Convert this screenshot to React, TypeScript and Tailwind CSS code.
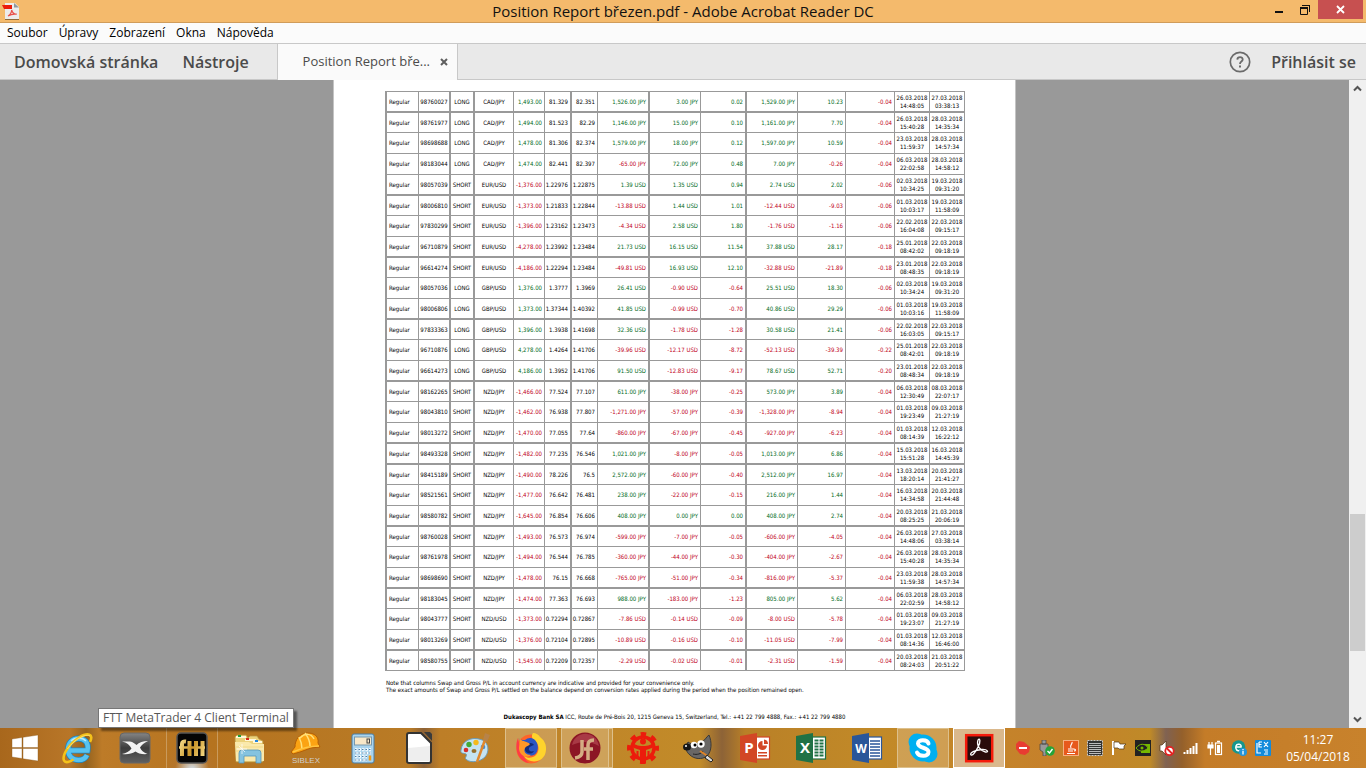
import React from 'react';
import clsx from 'clsx';

const UI_FONT = "font-['Open_Sans','Noto_Sans',sans-serif]";

// type, id, side, pair, amount, open, close, gross, swap, swap acc, net, net acc, fee, opened, closed
const ROWS = `Regular|98760027|LONG|CAD/JPY|1,493.00|81.329|82.351|1,526.00 JPY|3.00 JPY|0.02|1,529.00 JPY|10.23|-0.04|26.03.2018 14:48:05|27.03.2018 03:38:13
Regular|98761977|LONG|CAD/JPY|1,494.00|81.523|82.29|1,146.00 JPY|15.00 JPY|0.10|1,161.00 JPY|7.70|-0.04|26.03.2018 15:40:28|28.03.2018 14:35:34
Regular|98698688|LONG|CAD/JPY|1,478.00|81.306|82.374|1,579.00 JPY|18.00 JPY|0.12|1,597.00 JPY|10.59|-0.04|23.03.2018 11:59:37|28.03.2018 14:57:34
Regular|98183044|LONG|CAD/JPY|1,474.00|82.441|82.397|-65.00 JPY|72.00 JPY|0.48|7.00 JPY|-0.26|-0.04|06.03.2018 22:02:58|28.03.2018 14:58:12
Regular|98057039|SHORT|EUR/USD|-1,376.00|1.22976|1.22875|1.39 USD|1.35 USD|0.94|2.74 USD|2.02|-0.06|02.03.2018 10:34:25|19.03.2018 09:31:20
Regular|98006810|SHORT|EUR/USD|-1,373.00|1.21833|1.22844|-13.88 USD|1.44 USD|1.01|-12.44 USD|-9.03|-0.06|01.03.2018 10:03:17|19.03.2018 11:58:09
Regular|97830299|SHORT|EUR/USD|-1,396.00|1.23162|1.23473|-4.34 USD|2.58 USD|1.80|-1.76 USD|-1.16|-0.06|22.02.2018 16:04:08|22.03.2018 09:15:17
Regular|96710879|SHORT|EUR/USD|-4,278.00|1.23992|1.23484|21.73 USD|16.15 USD|11.54|37.88 USD|28.17|-0.18|25.01.2018 08:42:02|22.03.2018 09:18:19
Regular|96614274|SHORT|EUR/USD|-4,186.00|1.22294|1.23484|-49.81 USD|16.93 USD|12.10|-32.88 USD|-21.89|-0.18|23.01.2018 08:48:35|22.03.2018 09:18:19
Regular|98057036|LONG|GBP/USD|1,376.00|1.3777|1.3969|26.41 USD|-0.90 USD|-0.64|25.51 USD|18.30|-0.06|02.03.2018 10:34:24|19.03.2018 09:31:20
Regular|98006806|LONG|GBP/USD|1,373.00|1.37344|1.40392|41.85 USD|-0.99 USD|-0.70|40.86 USD|29.29|-0.06|01.03.2018 10:03:16|19.03.2018 11:58:09
Regular|97833363|LONG|GBP/USD|1,396.00|1.3938|1.41698|32.36 USD|-1.78 USD|-1.28|30.58 USD|21.41|-0.06|22.02.2018 16:03:05|22.03.2018 09:15:17
Regular|96710876|LONG|GBP/USD|4,278.00|1.4264|1.41706|-39.96 USD|-12.17 USD|-8.72|-52.13 USD|-39.39|-0.22|25.01.2018 08:42:01|22.03.2018 09:18:19
Regular|96614273|LONG|GBP/USD|4,186.00|1.3952|1.41706|91.50 USD|-12.83 USD|-9.17|78.67 USD|52.71|-0.20|23.01.2018 08:48:34|22.03.2018 09:18:19
Regular|98162265|SHORT|NZD/JPY|-1,466.00|77.524|77.107|611.00 JPY|-38.00 JPY|-0.25|573.00 JPY|3.89|-0.04|06.03.2018 12:30:49|08.03.2018 22:07:17
Regular|98043810|SHORT|NZD/JPY|-1,462.00|76.938|77.807|-1,271.00 JPY|-57.00 JPY|-0.39|-1,328.00 JPY|-8.94|-0.04|01.03.2018 19:23:49|09.03.2018 21:27:19
Regular|98013272|SHORT|NZD/JPY|-1,470.00|77.055|77.64|-860.00 JPY|-67.00 JPY|-0.45|-927.00 JPY|-6.23|-0.04|01.03.2018 08:14:39|12.03.2018 16:22:12
Regular|98493328|SHORT|NZD/JPY|-1,482.00|77.235|76.546|1,021.00 JPY|-8.00 JPY|-0.05|1,013.00 JPY|6.86|-0.04|15.03.2018 15:51:28|16.03.2018 14:45:39
Regular|98415189|SHORT|NZD/JPY|-1,490.00|78.226|76.5|2,572.00 JPY|-60.00 JPY|-0.40|2,512.00 JPY|16.97|-0.04|13.03.2018 18:20:14|20.03.2018 21:41:27
Regular|98521561|SHORT|NZD/JPY|-1,477.00|76.642|76.481|238.00 JPY|-22.00 JPY|-0.15|216.00 JPY|1.44|-0.04|16.03.2018 14:34:58|20.03.2018 21:44:48
Regular|98580782|SHORT|NZD/JPY|-1,645.00|76.854|76.606|408.00 JPY|0.00 JPY|0.00|408.00 JPY|2.74|-0.04|20.03.2018 08:25:25|21.03.2018 20:06:19
Regular|98760028|SHORT|NZD/JPY|-1,493.00|76.573|76.974|-599.00 JPY|-7.00 JPY|-0.05|-606.00 JPY|-4.05|-0.04|26.03.2018 14:48:06|27.03.2018 03:38:14
Regular|98761978|SHORT|NZD/JPY|-1,494.00|76.544|76.785|-360.00 JPY|-44.00 JPY|-0.30|-404.00 JPY|-2.67|-0.04|26.03.2018 15:40:28|28.03.2018 14:35:34
Regular|98698690|SHORT|NZD/JPY|-1,478.00|76.15|76.668|-765.00 JPY|-51.00 JPY|-0.34|-816.00 JPY|-5.37|-0.04|23.03.2018 11:59:38|28.03.2018 14:57:34
Regular|98183045|SHORT|NZD/JPY|-1,474.00|77.363|76.693|988.00 JPY|-183.00 JPY|-1.23|805.00 JPY|5.62|-0.04|06.03.2018 22:02:59|28.03.2018 14:58:12
Regular|98043777|SHORT|NZD/USD|-1,373.00|0.72294|0.72867|-7.86 USD|-0.14 USD|-0.09|-8.00 USD|-5.78|-0.04|01.03.2018 19:23:07|09.03.2018 21:27:19
Regular|98013269|SHORT|NZD/USD|-1,376.00|0.72104|0.72895|-10.89 USD|-0.16 USD|-0.10|-11.05 USD|-7.99|-0.04|01.03.2018 08:14:36|12.03.2018 16:46:00
Regular|98580755|SHORT|NZD/USD|-1,545.00|0.72209|0.72357|-2.29 USD|-0.02 USD|-0.01|-2.31 USD|-1.59|-0.04|20.03.2018 08:24:03|21.03.2018 20:51:22`
  .split('\n')
  .map((line) => line.split('|'));

const COLS = [
  { width: 'w-[34px]', cell: 'border-l-2 border-r pl-[2px] text-left' },
  { width: 'w-[32px]', cell: 'border-r-2 text-center' },
  { width: 'w-[24px]', cell: 'border-r-2 text-center' },
  { width: 'w-[39px]', cell: 'border-r text-center' },
  { width: 'w-[31px]', cell: 'border-r pr-[2px] text-right', signed: true },
  { width: 'w-[27px]', cell: 'border-r-2 pr-[2px] text-right' },
  { width: 'w-[26px]', cell: 'border-r pr-[2px] text-right' },
  { width: 'w-[52px]', cell: 'border-r-2 pr-[2px] text-right', signed: true },
  { width: 'w-[51px]', cell: 'border-r pr-[2px] text-right', signed: true },
  { width: 'w-[46px]', cell: 'border-r-2 pr-[2px] text-right', signed: true },
  { width: 'w-[51px]', cell: 'border-r pr-[2px] text-right', signed: true },
  { width: 'w-[48px]', cell: 'border-r pr-[2px] text-right', signed: true },
  { width: 'w-[49px]', cell: 'border-r pr-[2px] text-right', signed: true },
  { width: 'w-[35px]', cell: 'border-r text-center', date: true },
  { width: 'w-[35px]', cell: 'border-r text-center', date: true },
];

// rows that close with a double rule
const THICK = [0, 4, 7, 10, 13, 16, 17, 20, 23, 26];

function PositionTable() {
  return (
    <table aria-label="Positions" className="w-[580px] table-fixed border-separate border-spacing-0 border-t border-[#999] text-[6px] leading-[8px]">
      <colgroup>
        {COLS.map((c, i) => <col key={i} className={c.width} />)}
      </colgroup>
      <tbody>
        {ROWS.map((row, r) => {
          const afterThick = THICK.includes(r - 1) && !THICK.includes(r);
          return (
            <tr key={row[1]} className={afterThick ? 'h-[20px]' : 'h-[21px]'}>
              {row.map((value, i) => {
                const col = COLS[i];
                return (
                  <td
                    key={i}
                    className={clsx(
                      'border-[#999] p-0 align-middle',
                      !col.date && 'whitespace-nowrap',
                      THICK.includes(r) ? 'border-b-2' : 'border-b',
                      col.cell,
                      col.signed ? (value.startsWith('-') ? 'text-[#c00020]' : 'text-[#006a1a]') : 'text-black',
                    )}
                  >
                    {value}
                  </td>
                );
              })}
            </tr>
          );
        })}
      </tbody>
    </table>
  );
}

function PdfIcon() {
  return (
    <svg width="18" height="18" viewBox="0 0 18 18" aria-hidden="true">
      <path d="M3 1h10l4 4v12H3z" fill="#ececec" />
      <path d="M12 1l5 4.500h-5z" fill="#8f979c" />
      <path d="M3 17.500h14" stroke="#8d6a3a" />
      <path d="M0 3h10v4H2z" fill="#ea1c0a" />
      <path d="M6 14c2-1 3.500-3.500 3.700-6 .8 3 2.300 4.500 5 4.200-3-.5-6 .2-8.700 1.800z" fill="none" stroke="#e8524c" strokeWidth="1.200" />
    </svg>
  );
}

function TitleBar() {
  return (
    <header className="relative flex h-[23px] shrink-0 items-center justify-center border-b border-[#d09c5a] bg-[#f4ba6c]">
      <span className="absolute left-[2px] top-[2px]"><PdfIcon /></span>
      <h1 className="text-[15px] leading-[20px] text-[#111]">Position Report březen.pdf - Adobe Acrobat Reader DC</h1>
      <div className="absolute right-[3px] top-0 flex h-[19px]">
        <button aria-label="Minimize" className="flex w-[27px] items-center justify-center">
          <svg width="10" height="10" viewBox="0 0 10 10"><path d="M1 7h8" stroke="#111" strokeWidth="2" /></svg>
        </button>
        <button aria-label="Restore" className="flex w-[26px] items-center justify-center">
          <svg width="12" height="12" viewBox="0 0 12 12" fill="none" stroke="#111"><path d="M1.500 4v6.500h7V4M3.500 1.500h7V8" /><path d="M1 4h8" strokeWidth="2" /><path d="M3 1.500h8" /></svg>
        </button>
        <button aria-label="Close" className="flex w-[45px] items-center justify-center bg-[#c75050]">
          <svg width="9" height="9" viewBox="0 0 9 9"><path d="M1 1l7 7M8 1L1 8" stroke="#fff" strokeWidth="1.800" /></svg>
        </button>
      </div>
    </header>
  );
}

function MenuBar() {
  return (
    <nav className="flex h-[20px] shrink-0 items-center gap-[11px] bg-[#fbfbfb] px-[7px] text-xs text-black">
      {['Soubor', 'Úpravy', 'Zobrazení', 'Okna', 'Nápověda'].map((m) => <button key={m}>{m}</button>)}
    </nav>
  );
}

function ToolBar() {
  return (
    <div className="flex h-[37px] shrink-0 items-stretch border-y border-[#c8c8c8] bg-[#e9e9e9] text-[#4b4b4b]">
      <div className="flex w-[277px] items-center gap-[24px] whitespace-nowrap pl-[14px] text-base font-semibold">
        <button>Domovská stránka</button>
        <button>Nástroje</button>
      </div>
      <div className="-mb-px flex w-[181px] items-center justify-end gap-[10px] border-x border-[#c8c8c8] bg-[#fafafa] pr-[9px]">
        <span className="text-[13px]">Position Report bře...</span>
        <button aria-label="Close tab">
          <svg width="8" height="8" viewBox="0 0 8 8"><path d="M1 1l6 6M7 1L1 7" stroke="#5e5e5e" strokeWidth="2" /></svg>
        </button>
      </div>
      <div className="ml-auto flex items-center gap-[20px] pr-[10px]">
        <button aria-label="Help">
          <svg width="22" height="22" viewBox="0 0 22 22" fill="none" stroke="#6b6b6b">
            <circle cx="11" cy="11" r="9.700" strokeWidth="1.700" />
            <path d="M8.300 8.600c.2-3.300 5.600-3.200 5.400 0-.1 2-2.700 2-2.700 4.300" strokeWidth="1.800" />
            <path d="M11 14.500v2" strokeWidth="2" />
          </svg>
        </button>
        <button className="text-base font-semibold">Přihlásit se</button>
      </div>
    </div>
  );
}

function ScrollBar() {
  return (
    <div className="flex w-[17px] shrink-0 flex-col bg-[#f0f0f0] px-px">
      <button aria-label="Scroll up" className="flex h-[17px] items-center justify-center">
        <svg width="9" height="7" viewBox="0 0 9 7"><path d="M1 5.500l3.500-3.500L8 5.500" fill="none" stroke="#555" strokeWidth="2" /></svg>
      </button>
      <div className="flex-[417]" />
      <div className="flex-[137] bg-[#cdcdcd]" />
      <div className="flex-[60]" />
      <button aria-label="Scroll down" className="flex h-[17px] items-center justify-center">
        <svg width="9" height="7" viewBox="0 0 9 7"><path d="M1 1.500L4.500 5 8 1.500" fill="none" stroke="#555" strokeWidth="2" /></svg>
      </button>
    </div>
  );
}

function Document() {
  return (
    <main className="flex min-h-0 flex-1 bg-[#999]">
      <div className="flex flex-1 justify-center overflow-hidden">
        <article className="w-full max-w-[683px] border-x border-[#c4c4c4] bg-white px-[51px] pt-[11px] font-['DejaVu_Sans_Condensed','DejaVu_Sans',sans-serif] text-[6px] leading-[7px] text-black">
          <PositionTable />
          <p className="mt-[8px] pl-px">Note that columns Swap and Gross P/L in account currency are indicative and provided for your convenience only.</p>
          <p className="pl-px">The exact amounts of Swap and Gross P/L settled on the balance depend on conversion rates applied during the period when the position remained open.</p>
          <p className="mt-[20px] text-center">
            <b>Dukascopy Bank SA</b> ICC, Route de Pré-Bois 20, 1215 Geneva 15, Switzerland, Tel.: +41 22 799 4888, Fax.: +41 22 799 4880
          </p>
        </article>
      </div>
      <ScrollBar />
    </main>
  );
}

function Icon({ children }: { children: React.ReactNode }) {
  return <svg width="32" height="32" viewBox="0 0 32 32" aria-hidden="true">{children}</svg>;
}

function StartIcon() {
  return (
    <svg width="28" height="28" viewBox="0 0 28 28" aria-hidden="true" fill="#fff" stroke="#8a5a20" strokeWidth=".4">
      <path d="M1 5l10-1.500v10H1zM12 3.300L27 1v12.500H12zM1 14.500h10v10L1 23zM12 14.500h15V27l-15-2.200z" />
    </svg>
  );
}

function ExplorerIcon() {
  return (
    <Icon>
      <path d="M6 18.500h19.500C27 10 22 6.500 16.500 6.500 10 6.500 6 11.500 6 17.500c0 7 5 10.500 10.500 10.500 4 0 7-1.500 8.500-5" fill="none" stroke="#1b84c4" strokeWidth="6" />
      <path d="M6 18.500h19.500C27 10 22 6.500 16.500 6.500 10 6.500 6 11.500 6 17.500c0 7 5 10.500 10.500 10.500 4 0 7-1.500 8.500-5" fill="none" stroke="#58c3f0" strokeWidth="4.500" />
      <path d="M9 9c4-4 11-4 15 0" stroke="#b5ebff" strokeWidth="1.500" fill="none" />
      <path d="M28 10C32 2 26 0 17 5.500 6 12.500 0 24 2 28.500c1.300 2.800 6 1.500 9.500-1" fill="none" stroke="#f4c21a" strokeWidth="2.600" />
      <path d="M28 4C24 1 12 7.500 5.500 17" fill="none" stroke="#ffe680" strokeWidth=".8" />
    </Icon>
  );
}

function XIcon() {
  return (
    <Icon>
      <defs><linearGradient id="xg" x2="0" y2="1"><stop stopColor="#858585" /><stop offset=".5" stopColor="#3c3c3c" /><stop offset="1" stopColor="#606060" /></linearGradient></defs>
      <rect x="1" y="1" width="30" height="30" rx="4" fill="url(#xg)" stroke="#666" />
      <path d="M3 9.500h8c3 .5 5 2 6.500 3.500C20 10.500 24 9 29 9c-4 2-6.500 4-8 6.500 1 3 3.500 5 7.500 6.500-5 .5-10-.5-12-2.500-4 2.500-8 3-13.500 2.500 4-1 7.500-2.500 9.500-5.500-2-3.500-4.500-6-9.500-7z" fill="#f2f2f2" />
    </Icon>
  );
}

function FttIcon() {
  return (
    <Icon>
      <defs><linearGradient id="gold" x1="0" y1="8" x2="32" y2="24" gradientUnits="userSpaceOnUse"><stop stopColor="#fff1a8" /><stop offset=".5" stopColor="#c99428" /><stop offset="1" stopColor="#ffe99a" /></linearGradient></defs>
      <rect x="1" y="1" width="30" height="30" rx="4" fill="#050505" stroke="#555" strokeWidth="1.500" />
      <path d="M6 24V12q0-3 4-2.500M13.500 24V9M20 24V9M26.500 24V9" stroke="url(#gold)" strokeWidth="4" fill="none" />
      <path d="M3 15.500h26" stroke="url(#gold)" strokeWidth="2.500" />
    </Icon>
  );
}

function FolderIcon() {
  return (
    <Icon>
      <path d="M2 5l2-2h9l2 3 2-2h7l2 3 4 2v21H3z" fill="#ecd27c" stroke="#b69443" strokeWidth=".7" />
      <path d="M3 5h10M12 8h11M20 10h9" stroke="#fff8db" strokeWidth="2" />
      <path d="M5 4h3" stroke="#1b9e3a" strokeWidth="2" /><path d="M13 7h3" stroke="#d6281d" strokeWidth="2" /><path d="M22 9h3" stroke="#2386df" strokeWidth="2" />
      <path d="M2 10h14l3 2h12v17H3z" fill="#fae9ac" />
      <path d="M3 15h27M3 19h27" stroke="#f1d989" />
      <path d="M6 31V21q0-3 3-3h16q3 0 3 3v10h-5v-7H11v7z" fill="#85c3df" stroke="#5395b8" strokeWidth=".8" />
      <path d="M9 12v10M4 17h10M6 14l6 6" stroke="#fff" strokeWidth=".7" />
    </Icon>
  );
}

function HelmetIcon() {
  return (
    <Icon>
      <path d="M5 15C5 8 9 2 16 1c9-.5 13 4 12 10l2 4-9 1-11 4-7 2-2-2z" fill="#fba313" stroke="#b45f05" />
      <path d="M10 6c5-5 11-5 14 1M15 1c3 4 5 8 5 13M9 5c2 4 3 8 3 12" fill="none" stroke="#ffe07a" strokeWidth="1.500" />
      <path d="M3 20c9-4 16-6 26-6" fill="none" stroke="#ffc642" strokeWidth="1.500" />
      <text x="16" y="31" textAnchor="middle" fontSize="8" fontFamily="Liberation Sans, sans-serif" fill="#d0d0d0">SIBLEX</text>
    </Icon>
  );
}

function CalcIcon() {
  return (
    <Icon>
      <rect x="5" y="2" width="22" height="29" rx="2" fill="#a9d4ee" stroke="#487ca4" />
      <rect x="7.500" y="5" width="17" height="8" fill="#f9e8c8" stroke="#7898ac" />
      <rect x="20" y="7" width="2.500" height="4" fill="none" stroke="#444" />
      <path d="M8 17.500h16M8 21h16M8 24.500h12M8 28h12" stroke="#fff" strokeWidth="2.500" strokeDasharray="2.500 1" />
      <path d="M8 17.500h16M8 21h16M8 24.500h12M8 28h12" stroke="#517fa4" strokeWidth="1" strokeDasharray="1.500 2" />
      <path d="M23 23.500v5" stroke="#f29b18" strokeWidth="2.500" />
    </Icon>
  );
}

function LibreIcon() {
  return (
    <Icon>
      <path d="M6 1h12l10 10v18q0 2-2 2H6q-2 0-2-2V3q0-2 2-2z" fill="#fff" stroke="#333" strokeWidth="2" />
      <path d="M21 0h6l2 2v7z" fill="#3b3b3b" />
      <path d="M5 16l22-2v15H5z" fill="#eee" />
    </Icon>
  );
}

function PaintIcon() {
  return (
    <Icon>
      <path d="M2 18C3 9 12 5 20 7c10 2 11 12 6 18-5 5-14 6-18 3-4-2 1-4-1-6-2-1-6 0-5-4z" fill="#c5e3f1" stroke="#6d9bb6" />
      <circle cx="7" cy="18" r="2.300" fill="#d62e28" /><circle cx="10" cy="12.500" r="2.700" fill="#43aa35" /><circle cx="17" cy="10.500" r="2.700" fill="#f5ba1b" />
      <circle cx="24" cy="15" r="2.300" fill="#478ccf" /><ellipse cx="15" cy="19" rx="2.500" ry="2" fill="#96702c" />
      <path d="M27 5L18 30" stroke="#e0872c" strokeWidth="2.500" /><path d="M24 8l2-7 5 2-3 7z" fill="#b78349" />
    </Icon>
  );
}

function FirefoxIcon() {
  return (
    <Icon>
      <circle cx="16" cy="17" r="14.500" fill="#ff6528" />
      <path d="M18 1c-2 3-1 6 2 8 4 3 5 10 1 14-3 3-8 4-12 1 4 8 21 8 22-6 .5-6-2-10-6-13-1-2-4-4-7-4z" fill="#ffd32c" />
      <path d="M3 6c2 2 4 2 7 2 3-2 6-3 10 0 4 4 4 12-1 15-5 2-9 0-10-4-2-4 0-7 3-8-3 0-5-1-6-3z" fill="#2b56c4" />
      <path d="M12 12c3-2 6-1 7 1-2 1-4 1-5 3-1 3 2 4 5 3-2 4-8 3-9-1 0-3 0-4 2-6z" fill="#142c78" />
      <path d="M3 6c-4 9-1 23 11 25-6-5-8-10-7-15L4 11z" fill="#ff3b45" />
      <path d="M5 7c3 3 7 2 10 5-1 2-4 2-5 4-2 4 1 7 6 7-5 4-12 0-12-7z" fill="#ff9828" />
    </Icon>
  );
}

function ForexIcon() {
  return (
    <Icon>
      <circle cx="16" cy="16" r="15.500" fill="#8c1525" />
      <path d="M3 13C5 4 13 1 18 2c8 1 11 7 12 12-9-5-17-5-27-1z" fill="#bb515b" opacity=".6" />
      <path d="M13 8v12q0 5-7 6M19 28V13q0-5 6-5M15 17h9" fill="none" stroke="#d4ad83" strokeWidth="3.500" />
    </Icon>
  );
}

function GearManIcon() {
  return (
    <Icon>
      <circle cx="16" cy="16" r="11" fill="none" stroke="#ec1c0c" strokeWidth="3.500" />
      <circle cx="16" cy="16" r="14" fill="none" stroke="#ec1c0c" strokeWidth="4" strokeDasharray="5.500 5.495" strokeDashoffset="2.750" />
      <circle cx="16" cy="9.500" r="3" fill="#ec1c0c" />
      <path d="M7 12q4 2 7 2h4q3 0 7-2v4l-6 2v13h-6V18l-6-2z" fill="#ec1c0c" />
      <path d="M10.500 19v7M21.500 19v7" stroke="#ec1c0c" strokeWidth="2" />
    </Icon>
  );
}

function GimpIcon() {
  return (
    <Icon>
      <path d="M5 10c4 3 9 2 13 0 4-1 5-5 8-7 3 7 3 16-2 21-5 4-13 3-17-1-4-3-5-7-2-13z" fill="#696765" stroke="#3a3938" />
      <ellipse cx="4" cy="15" rx="4" ry="3.500" fill="#161616" /><circle cx="3" cy="14" r="1" fill="#fff" />
      <circle cx="11" cy="13" r="3.200" fill="#fff" /><circle cx="18" cy="12" r="3.700" fill="#fff" /><circle cx="12" cy="13" r="1.500" /><circle cx="18" cy="12" r="1.600" />
      <path d="M10 22c4 1 8 0 10-3" stroke="#222" fill="none" /><path d="M17 19l9 6" stroke="#df8427" strokeWidth="2" /><path d="M24 23l6 5-2 2-6-4z" fill="#ddd" stroke="#222" />
    </Icon>
  );
}

function OfficeIcon({ letter, color }: { letter: string; color: string }) {
  return (
    <Icon>
      <rect x="16" y="5" width="14.500" height="22" fill="#fff" stroke={color} strokeWidth="1.200" />
      {letter === 'P' && <g fill={color}><path d="M23.500 9a4.500 4.500 0 1 0 4.500 4.500h-4.500z" /><path d="M25 7.500a4.500 4.500 0 0 1 4 4.500h-4z" /><path d="M19 20h9v1.500h-9zM19 23h9v1.500h-9z" /></g>}
      {letter === 'X' && <path d="M19.500 8.500h9.500M19.500 11.500h9.500M19.500 14.500h9.500M19.500 17.500h9.500M19.500 20.500h9.500M19.500 23.500h9.500" stroke={color} strokeWidth="1.800" strokeDasharray="4 1" />}
      {letter === 'W' && <path d="M19 9h10M19 12h10M19 15h10M19 18h10M19 21h10M19 24h10" stroke={color} strokeWidth="1.300" />}
      <path d="M1 4l17-3v30L1 28z" fill={color} />
      <text x="10" y="21" textAnchor="middle" fontSize={letter === 'W' ? 12 : 15} fontWeight="700" fontFamily="Open Sans, sans-serif" fill="#fff">{letter}</text>
    </Icon>
  );
}

function SkypeIcon() {
  return (
    <Icon>
      <circle cx="10" cy="10" r="8.500" fill="#00aff0" /><circle cx="22" cy="22" r="8.500" fill="#00aff0" /><circle cx="16" cy="16" r="13.500" fill="#00aff0" />
      <path d="M21.500 11.500c-1-4-10.500-4.500-10.500 0 0 5 10.500 3.500 10.500 8.500s-9.500 5-11.500.5" fill="none" stroke="#fff" strokeWidth="4" strokeLinecap="round" />
    </Icon>
  );
}

function AcrobatIcon() {
  return (
    <Icon>
      <rect x="3.200" y="3.200" width="26" height="26" fill="#2a0c0b" stroke="#f51b0b" strokeWidth="2.500" />
      <path d="M8 23c-2-2 4-5 11-5.500 6-.3 7 3 3.500 2.500C18 19 13 14 15 8c2-3 3 2 0 7-2 4-5 9-7 8z" fill="none" stroke="#fff" strokeWidth="1.300" />
    </Icon>
  );
}

const PINNED = [
  { name: 'Internet Explorer', icon: <ExplorerIcon /> },
  { name: 'X Trader', icon: <XIcon /> },
  { name: 'FTT MetaTrader 4', icon: <FttIcon />, hot: true },
  { name: 'File Explorer', icon: <FolderIcon /> },
  { name: 'Siblex', icon: <HelmetIcon /> },
];

const APPS = [
  { name: 'Calculator', icon: <CalcIcon /> },
  { name: 'LibreOffice', icon: <LibreIcon /> },
  { name: 'Paint', icon: <PaintIcon /> },
  { name: 'Firefox', icon: <FirefoxIcon />, state: 'open' },
  { name: 'JForex', icon: <ForexIcon />, state: 'stack' },
  { name: 'Trader', icon: <GearManIcon /> },
  { name: 'GIMP', icon: <GimpIcon /> },
  { name: 'PowerPoint', icon: <OfficeIcon letter="P" color="#d24625" /> },
  { name: 'Excel', icon: <OfficeIcon letter="X" color="#207245" /> },
  { name: 'Word', icon: <OfficeIcon letter="W" color="#2a5699" /> },
  { name: 'Skype', icon: <SkypeIcon />, state: 'open' },
  { name: 'Acrobat Reader', icon: <AcrobatIcon />, state: 'active' },
];

const TRAY = [
  { name: 'Blocked', art: <><path d="M1 4l3-3 5 1 6 5-1 5-4 3-5-1-4-5z" fill="#e83c31" /><path d="M4 8h8" stroke="#fff" strokeWidth="2" /></> },
  { name: 'USB', art: <><path d="M3 0h4v4H3zM1 4h8v6l-2 2v4H4v-4l-3-2z" fill="#999" stroke="#444" strokeWidth=".7" /><circle cx="11" cy="11" r="4.800" fill="#24a43a" /><path d="M8.500 11l2 2 3-4" fill="none" stroke="#fff" strokeWidth="1.400" /></> },
  { name: 'Java', art: <><rect width="16" height="16" rx="1" fill="#e7591c" /><rect x=".5" y=".5" width="15" height="15" fill="none" stroke="#f4b080" /><path d="M9 2c1 2-3 3-1 6M5 9h6c2 0 2 2 0 2M5 11h5M4 13.500h8" fill="none" stroke="#fff" strokeWidth="1.200" /></> },
  { name: 'Network meter', art: <><rect x=".5" y=".5" width="15" height="15" fill="#333" stroke="#ccc" strokeDasharray="2 1" /><path d="M2 3.500h12M2 5.500h12M2 7.500h12M2 9.500h12M2 11.500h12M2 13.500h12" stroke="#bbb" /></> },
  { name: 'Action center', art: <><path d="M2 1v14" stroke="#fff" strokeWidth="2" /><path d="M3 2h5l1 2h6l-2 2v3H8L7 8H3z" fill="#fff" stroke="#4d3514" strokeWidth=".7" /></> },
  { name: 'Nvidia', art: <><rect width="16" height="16" fill="#222" /><path d="M6 4h9v9H6z" fill="#76b900" /><path d="M1 8c4-5 9-5 12 0-4 4-9 4-12 0z" fill="#222" stroke="#76b900" /><circle cx="7" cy="8" r="1.500" fill="#76b900" /></> },
  { name: 'Volume', art: <><path d="M1 5h2l4-4v14l-4-4H1z" fill="#fff" stroke="#4d3514" strokeWidth=".7" /><circle cx="10.500" cy="11" r="4.200" fill="#fff" stroke="#e32222" strokeWidth="1.800" /><path d="M7.500 8l6 6" stroke="#e32222" strokeWidth="1.800" /></> },
  { name: 'Wi-Fi', art: <path d="M1.500 12v2M4.500 10v4M7.500 8v6M10.500 6v8M13.500 3v11" stroke="#fff" strokeWidth="2" /> },
  { name: 'Battery', art: <><path d="M1 5h5v3H1zM2 2v3M5 2v3M3.500 8v7" fill="#fff" stroke="#fff" strokeWidth="1.200" /><rect x="8.500" y="3" width="6" height="11.500" fill="none" stroke="#fff" strokeWidth="1.200" /><path d="M10 1.500h3" stroke="#fff" strokeWidth="1.500" /><path d="M11.500 5v8" stroke="#fff" strokeWidth="3" /></> },
  { name: 'ESET', art: <><circle cx="7.500" cy="7" r="6.800" fill="#16968d" /><path d="M10 10c-4 2-6-1-5-4s6-2 5 1H5" fill="none" stroke="#fff" strokeWidth="1.500" /><circle cx="12" cy="12" r="4" fill="#2195dc" /><path d="M12 9v1.300M12 11v3.500" stroke="#fff" strokeWidth="1.300" /></> },
  { name: 'EX', art: <><rect width="16" height="16" rx="1" fill="#138bdb" /><path d="M4 2h3M4 2v5h3M4 4.500h2.500M9 2l4 5M13 2L9 7M2 3v10h4M9 10h4M10 12h3M9 14h4" fill="none" stroke="#fff" strokeWidth="1.200" /></> },
];

function TaskBar() {
  return (
    <footer className="relative flex h-[40px] shrink-0 bg-[linear-gradient(90deg,#a8671c_0px,#b87628_70px,#93621f_86px,#bd7b28_102px,#b5731f_210px,#b97b26_410px,#8d6237_424px,#bd7e27_440px,#c28b29_700px,#8d6337_722px,#b98027_745px,#c28a28_880px,#c6802b_1060px,#bf8a28_1150px,#806252_1166px,#94602b_1182px,#c47c28_1205px,#c8822c_1366px)]">
      <div className="absolute bottom-full left-[98px] whitespace-nowrap border border-[#767676] bg-white px-[4px] text-xs leading-[18px] text-[#575757] shadow-[3px_3px_2px_rgba(0,0,0,0.45)]">
        FTT MetaTrader 4 Client Terminal
      </div>
      <button aria-label="Start" className="flex w-[49px] items-center justify-center"><StartIcon /></button>
      <div className="ml-[3px] flex gap-[5px]">
        {PINNED.map((p) => (
          <button
            key={p.name}
            aria-label={p.name}
            className={clsx('flex w-[52px] items-center justify-center', p.hot && 'border-x border-[#c99a5c] bg-[radial-gradient(circle_at_50%_105%,#d3e4f3_0%,#b5752a_35%,transparent_60%)]')}
          >
            {p.icon}
          </button>
        ))}
      </div>
      <div className="ml-[5px] flex gap-[4px]">
        {APPS.map((a) => (
          <button
            key={a.name}
            aria-label={a.name}
            className={clsx(
              'flex w-[52px] items-center justify-center',
              a.state === 'open' && 'border border-[#ddc08c] bg-white/20',
              a.state === 'active' && 'border border-white bg-[#dab88c]',
            )}
          >
            {a.state === 'stack' ? (
              <span className="flex h-full w-full border border-[#ddc08c] bg-white/15 pr-[3px]">
                <span className="flex flex-1 items-center justify-center border-r border-[#ddc08c] bg-white/10">{a.icon}</span>
              </span>
            ) : a.icon}
          </button>
        ))}
      </div>
      <div className="ml-[6px] flex">
        {TRAY.map((t) => (
          <button key={t.name} aria-label={t.name} className="flex w-[24px] items-center justify-center">
            <svg width="16" height="16" viewBox="0 0 16 16">{t.art}</svg>
          </button>
        ))}
      </div>
      <div className="ml-auto mr-[14px] flex w-[68px] flex-col items-center justify-center text-xs leading-[17px] text-white">
        <time>11:27</time>
        <time>05/04/2018</time>
      </div>
    </footer>
  );
}

export default function App() {
  return (
    <div className={clsx('flex h-screen flex-col overflow-hidden', UI_FONT)}>
      <TitleBar />
      <MenuBar />
      <ToolBar />
      <Document />
      <TaskBar />
    </div>
  );
}
